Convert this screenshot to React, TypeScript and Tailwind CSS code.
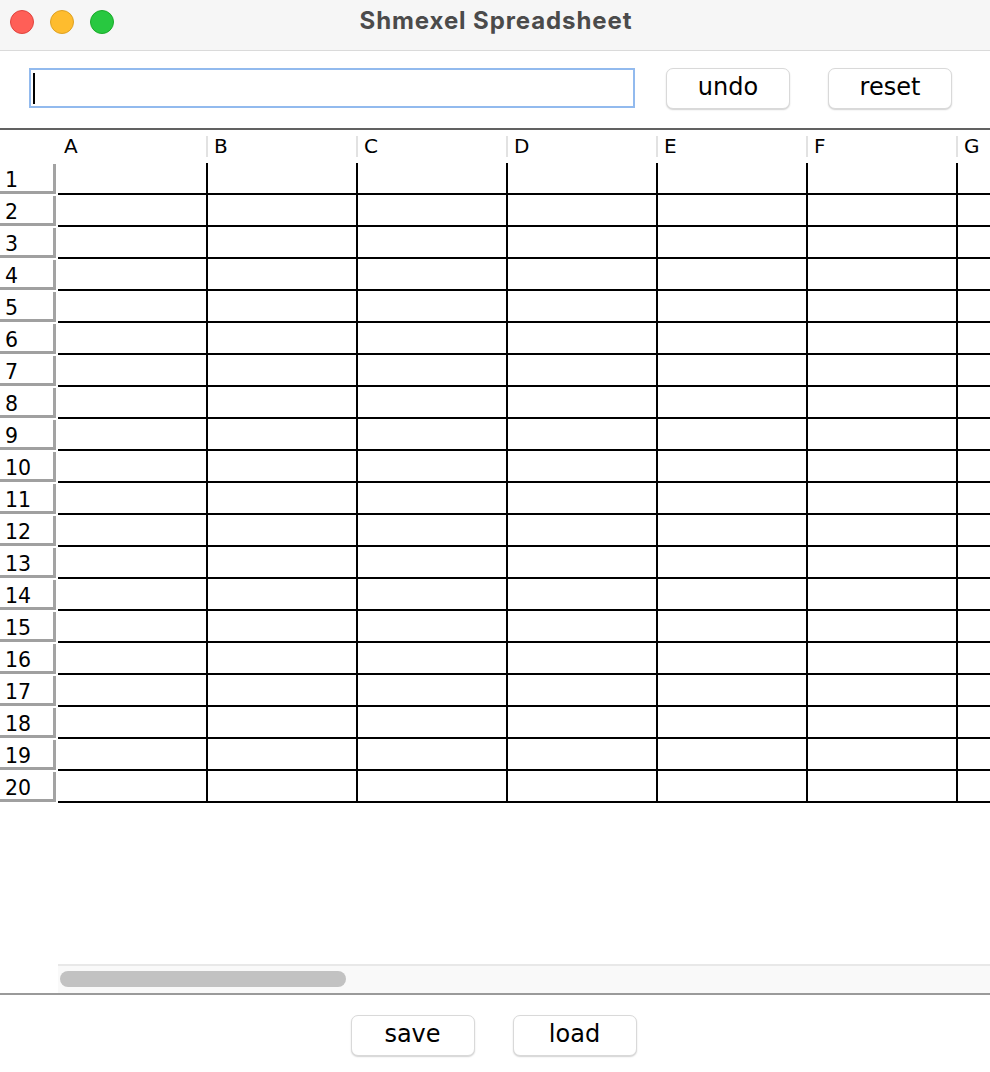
import React from 'react';

const COLUMNS = ['A', 'B', 'C', 'D', 'E', 'F', 'G'];
const ROWS = Array.from({ length: 20 }, (_, i) => i + 1);

const Btn: React.FC<{ label: string; className?: string }> = ({ label, className }) => (
  <button
    className={
      'h-[41px] w-[124px] shrink-0 rounded-[7px] border border-[#d9d9d9] bg-white text-[24px] leading-none text-black shadow-[0_1px_1.5px_rgba(0,0,0,0.18)] flex items-center justify-center pb-[3px] ' +
      (className ?? '')
    }
  >
    {label}
  </button>
);

export default function App() {
  return (
    <div className="w-[990px] h-[1072px] overflow-hidden flex flex-col bg-white font-['DejaVu_Sans',sans-serif] text-black">
      {/* Title bar */}
      <div className="h-[51px] shrink-0 bg-[#f6f6f6] border-b border-[#dadada] flex items-center relative">
        <div className="flex items-center gap-4 pl-[10px] pb-[7px]">
          <span className="w-6 h-6 rounded-full bg-[#ff5f57] border border-[#e0443e]" />
          <span className="w-6 h-6 rounded-full bg-[#febc2e] border border-[#dea123]" />
          <span className="w-6 h-6 rounded-full bg-[#28c840] border border-[#1aab29]" />
        </div>
        <div className="absolute inset-x-0 top-0 h-[42px] flex items-center justify-center pointer-events-none">
          <span className="font-['Inter',sans-serif] font-bold text-[24px] text-[#4b4b4b] tracking-[0.9px] pl-[2px]">
            Shmexel Spreadsheet
          </span>
        </div>
      </div>

      {/* Toolbar */}
      <div className="h-[77px] shrink-0 flex items-center pl-[29px] pb-[3px]">
        <div className="w-[606px] h-[40px] border-2 border-[#92baee] bg-white flex items-center pl-[2px]">
          <span className="w-[2px] h-[31px] bg-black" />
        </div>
        <Btn label="undo" className="ml-[31px]" />
        <Btn label="reset" className="ml-[38px]" />
      </div>

      {/* Table */}
      <div className="flex-1 flex flex-col border-t-2 border-[#616161] overflow-hidden">
        <div className="h-[33px] shrink-0 flex text-[20px] leading-none">
          <div className="w-[58px] shrink-0" />
          {COLUMNS.map((c) => (
            <div key={c} className="w-[150px] shrink-0 flex justify-between">
              <span className="pl-[6px] pt-[6px]">{c}</span>
              <span className="w-[2px] h-[21px] mt-[6px] bg-[#e2e2e2]" />
            </div>
          ))}
        </div>

        {ROWS.map((r) => (
          <div key={r} className="h-[32px] shrink-0 flex">
            <div className="w-[58px] shrink-0 pt-[1px]">
              <div className="w-[56px] h-[30px] border-r-[3px] border-b-[3px] border-r-[#a3a3a3] border-b-[#a0a0a0] flex items-end pl-[5px] pb-[1px] text-[20.5px] leading-none">
                {r}
              </div>
            </div>
            {COLUMNS.map((c) => (
              <div key={c} className="w-[150px] h-[32px] shrink-0 border-r-2 border-b-2 border-black" />
            ))}
          </div>
        ))}

        <div className="flex-1" />

        {/* Horizontal scrollbar */}
        <div className="h-[29px] shrink-0 ml-[58px] bg-[#f9f9f9] border-t-2 border-[#e8e8e8] flex items-center pl-[2px] pb-[1px]">
          <div className="w-[286px] h-[16px] rounded-full bg-[#c2c2c2]" />
        </div>
      </div>

      {/* Bottom bar */}
      <div className="h-[79px] shrink-0 border-t-2 border-[#9a9a9a] flex justify-center pt-[20px] pr-[3px]">
        <Btn label="save" className="w-[122px] h-[40px]" />
        <Btn label="load" className="w-[122px] h-[40px] ml-[38px]" />
      </div>
    </div>
  );
}
